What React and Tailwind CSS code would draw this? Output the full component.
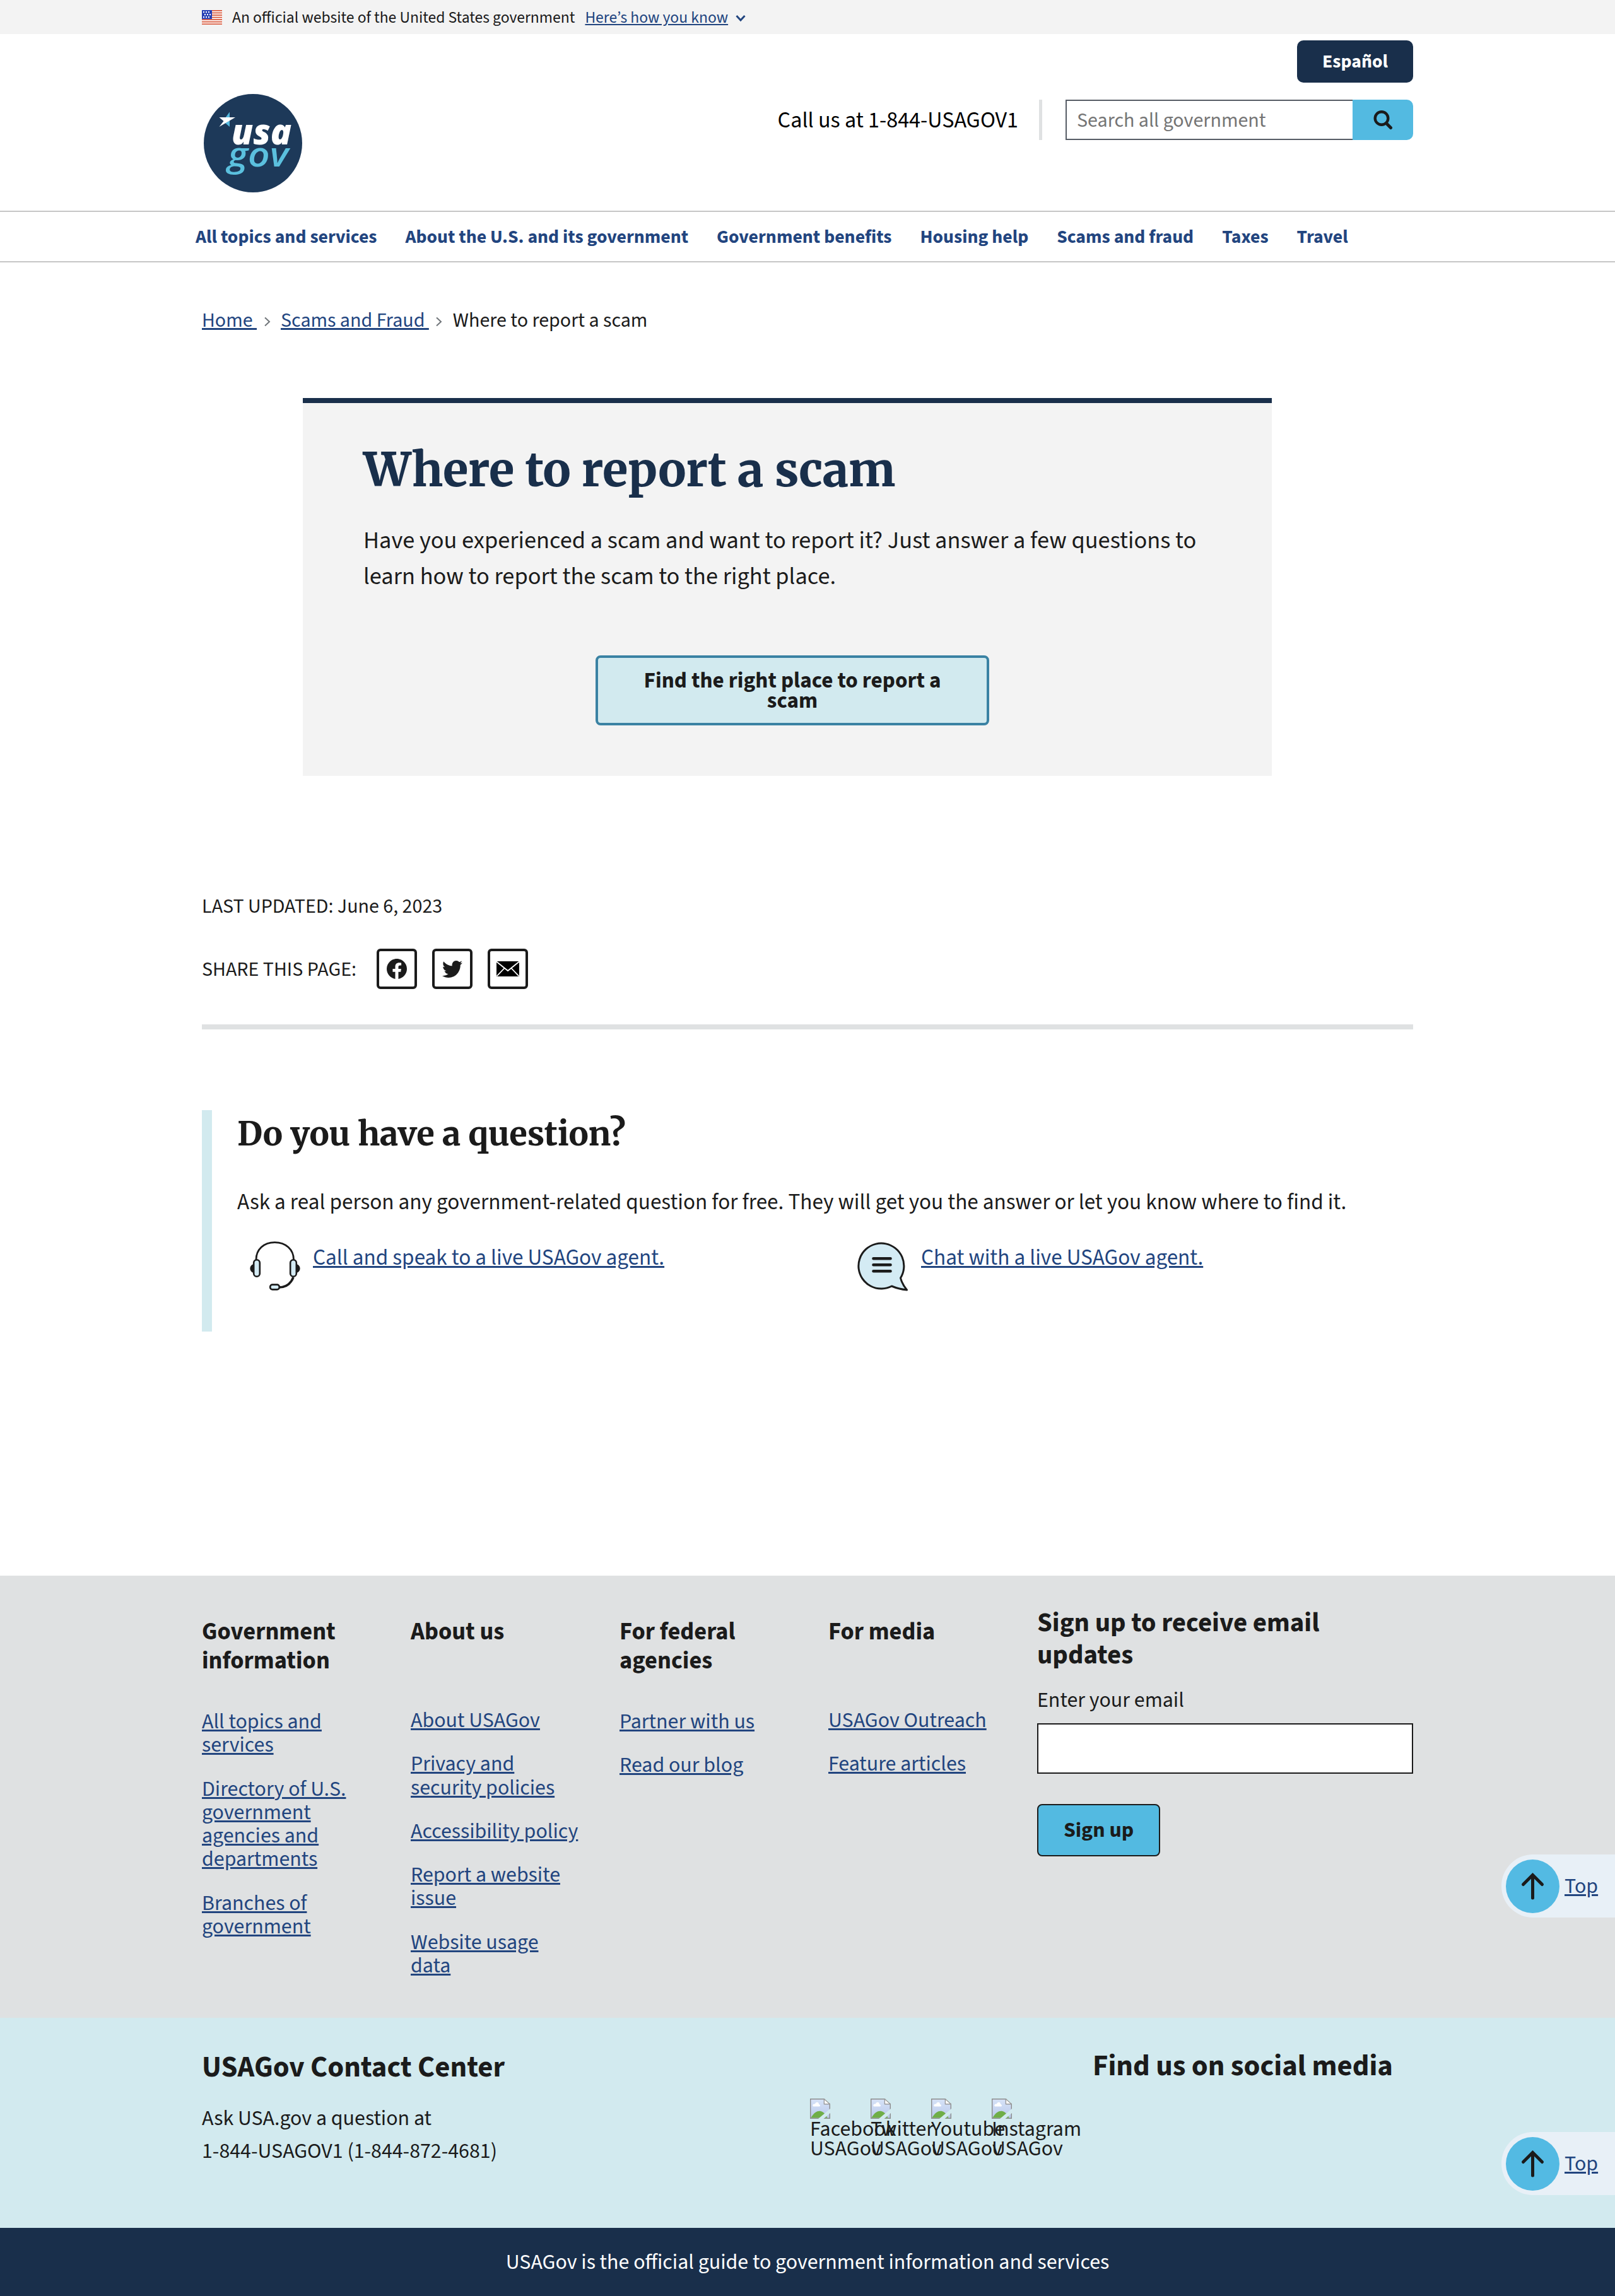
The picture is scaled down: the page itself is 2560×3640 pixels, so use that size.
import React from 'react';

const LINK = 'text-[#22457f] underline';

const NAV_ITEMS = [
  'All topics and services',
  'About the U.S. and its government',
  'Government benefits',
  'Housing help',
  'Scams and fraud',
  'Taxes',
  'Travel',
];

const FOOTER_COLUMNS = [
  {
    title: 'Government information',
    tall: true,
    links: ['All topics and services', 'Directory of U.S. government agencies and departments', 'Branches of government'],
  },
  {
    title: 'About us',
    tall: false,
    links: ['About USAGov', 'Privacy and security policies', 'Accessibility policy', 'Report a website issue', 'Website usage data'],
  },
  { title: 'For federal agencies', tall: true, links: ['Partner with us', 'Read our blog'] },
  { title: 'For media', tall: false, links: ['USAGov Outreach', 'Feature articles'] },
];

const SOCIAL = ['Facebook', 'Twitter', 'Youtube', 'Instagram'];

function Flag() {
  return (
    <svg width="32" height="23" viewBox="0 0 32 23" className="block shrink-0">
      <rect width="32" height="23" fill="#fff" />
      {[0, 1, 2, 3, 4, 5, 6].map((i) => (
        <rect key={i} y={i * 3.55} width="32" height="1.8" fill="#d9593d" />
      ))}
      <rect width="16" height="14.2" fill="#2740b5" />
      {[2, 6, 10].map((x) => (
        <g key={x} fill="#fff">
          <rect x={x} y="2" width="2" height="2.2" />
          <rect x={x + 2} y="6" width="2" height="2.2" />
          <rect x={x} y="10" width="2" height="2.2" />
        </g>
      ))}
    </svg>
  );
}

function Logo() {
  return (
    <svg width="156" height="156" viewBox="0 0 156 156" className="block">
      <circle cx="78" cy="78" r="78" fill="#1d3959" />
      <path d="M41 28.5 L34 38 L41 38 Z M34 46 L41 42 L41 52 Z" fill="#55b9de" />
      <path d="M24.5 37 L50 37 L24.5 52 L31.5 43 Z" fill="#fff" />
      <text x="44" y="79.5" textLength="95" lengthAdjust="spacingAndGlyphs" fill="#fff" className="font-['Open_Sans',sans-serif] text-[57px] font-extrabold italic">
        usa
      </text>
      <text x="38" y="115" textLength="96" lengthAdjust="spacingAndGlyphs" fill="#5bc0de" className="font-['Open_Sans',sans-serif] text-[54px] font-semibold italic">
        gov
      </text>
    </svg>
  );
}

function Chevron({ className, size }) {
  return (
    <svg width={size} height={size} viewBox="0 0 20 20" fill="none" stroke="currentColor" className={className}>
      <path d="M6 3.5 L13 10 L6 16.5" />
    </svg>
  );
}

function HeadsetIcon() {
  return (
    <svg width="80" height="78" viewBox="0 0 80 78" className="block shrink-0" fill="none" stroke="#1b1b1b">
      <path d="M10 29 C10 13 22 1.6 39.5 1.6 C57 1.6 69.5 13 69.5 29" strokeWidth="2.8" />
      <path d="M6 36 C-1.5 38 -1.5 48 6 50 Z M74 36 C81.5 38 81.5 48 74 50 Z" fill="#1b1b1b" stroke="none" />
      <path d="M69 57 C65 67 57 73 46 73" strokeWidth="3.6" />
      <rect x="6.2" y="29.2" width="9.6" height="26.6" rx="4.8" fill="#d4ebf4" strokeWidth="2.6" />
      <rect x="64.2" y="29.2" width="9.6" height="26.6" rx="4.8" fill="#d4ebf4" strokeWidth="2.6" />
      <rect x="32.2" y="68.6" width="14.6" height="7.8" rx="3.6" fill="#d4ebf4" strokeWidth="2.6" />
    </svg>
  );
}

function ChatIcon() {
  return (
    <svg width="79" height="79" viewBox="0 0 79 79" className="block shrink-0 overflow-visible" stroke="#1b1b1b">
      <path
        d="M52.5 71 A36 36 0 1 1 66.5 58 Q69 68 76.5 77 Q63 75.5 52.5 71 Z"
        fill="#d4ebf4"
        strokeWidth="3"
        strokeLinejoin="round"
      />
      <path d="M23.5 27.2 H50.5 M23.5 37.2 H50.5 M23.5 47.2 H50.5" strokeWidth="4.6" strokeLinecap="round" />
    </svg>
  );
}

function BrokenImage() {
  return (
    <svg width="32" height="32" viewBox="0 0 32 32" className="block">
      <defs>
        <linearGradient id="sky" x1="0" y1="0" x2="0" y2="1">
          <stop offset="0" stopColor="#d7e3f8" />
          <stop offset="1" stopColor="#b9c9ea" />
        </linearGradient>
      </defs>
      <path d="M0.7 0.7 H22.5 V8.5 H31.3 V31.3 H0.7 Z" fill="url(#sky)" stroke="#8c8c8c" strokeWidth="1.4" />
      <path d="M22.5 0.7 L31.3 8.7 H22.5 Z" fill="#fff" stroke="#9a9a9a" strokeWidth="1.2" />
      <path d="M5 12.5 C3 9.5 6 8 8 8.5 C9 4.5 14 5 14 9 C16.5 9.5 16.5 12 15 12.5 Z" fill="#fff" />
      <path d="M1.4 30.6 C6 22 12 19 17 20 C21 21 25 25 27.5 30.6 Z" fill="#6fae47" />
      <path d="M32.5 15.5 L12.5 32.5 H21 L32.5 22.5 Z" fill="#d2eaef" />
    </svg>
  );
}

function ShareButton({ children }) {
  return (
    <span className="flex size-16 items-center justify-center rounded-md border-4 border-[#1b1b1b]">{children}</span>
  );
}

function TopLink() {
  return (
    <div className="flex h-[100px] w-[180px] items-center rounded-l-full bg-[#e8f0f7] pl-[7px]">
      <svg width="85" height="85" viewBox="0 0 85 85" className="block shrink-0">
        <circle cx="42.5" cy="42.5" r="42.5" fill="#53bae3" />
        <path
          d="M42.5 61 V25 M27.5 39.5 L42.5 24.5 L57.5 39.5"
          fill="none"
          stroke="#1b1b1b"
          strokeWidth="5"
          strokeLinecap="round"
        />
      </svg>
      <a className={LINK + ' ml-2 pt-0.5 text-[33.9px] leading-[40px]'}>Top</a>
    </div>
  );
}

export default function App() {
  return (
    <div className="relative w-[2560px] bg-white font-['Source_Sans_3','Noto_Sans_CJK_SC',sans-serif] text-[#1b1b1b]">
      {/* Government banner */}
      <div className="flex h-[54px] items-center bg-[#f3f3f3] px-80 text-[25.6px] leading-[50px]">
        <Flag />
        <span className="ml-4 pt-0.5">An official website of the United States government</span>
        <a className={LINK + ' ml-4 pt-0.5'}>Here’s how you know</a>
        <Chevron size={20} className="mt-1 ml-2.5 rotate-90 stroke-[3px] text-[#22457f]" />
      </div>

      {/* Header */}
      <header className="flex h-[280px] items-start justify-between px-80">
        <div className="mt-[95px] ml-[3px]">
          <Logo />
        </div>
        <div className="flex flex-col items-end">
          <button className="mt-2.5 h-[67px] w-[184px] rounded-[10px] bg-[#192f4b] pt-px text-[29.76px] font-bold text-white">
            Español
          </button>
          <div className="mt-[27px] flex h-16 items-center">
            <span className="pt-px text-[36.1px] leading-[60px] text-black">Call us at 1-844-USAGOV1</span>
            <span className="ml-[33px] h-16 w-[5px] bg-[#dfe1e2]" />
            <span className="ml-[37px] flex h-16 w-[455px] items-center border-2 border-r-0 border-[#565c65] pt-0.5 pl-4 text-[32px] text-[#757575]">
              Search all government
            </span>
            <span className="flex h-16 w-24 items-center justify-center rounded-r-[10px] bg-[#53bae1]">
              <svg width="32" height="32" viewBox="0 0 32 32" fill="none" stroke="#1b1b1b" strokeLinecap="round">
                <circle cx="14" cy="13.5" r="10.3" strokeWidth="4.4" />
                <path d="M22 22 L28.5 28.5" strokeWidth="5" />
              </svg>
            </span>
          </div>
        </div>
      </header>

      {/* Primary navigation */}
      <nav className="flex h-[82px] items-center gap-[45px] border-y-2 border-[#c6c6c6] px-[310px] pt-0.5 text-[29.76px] font-bold text-[#22457f]">
        {NAV_ITEMS.map((item) => (
          <a key={item}>{item}</a>
        ))}
      </nav>

      <main className="px-80 pt-[68px]">
        <div className="flex h-12 items-center text-[32px] leading-[48px]">
          <a className={LINK + ' whitespace-pre'}>{'Home '}</a>
          <Chevron size={20} className="mt-1 mr-[11px] ml-[7px] stroke-2 text-[#71767a]" />
          <a className={LINK + ' whitespace-pre'}>{'Scams and Fraud '}</a>
          <Chevron size={20} className="mt-1 mr-[12px] ml-[6px] stroke-2 text-[#71767a]" />
          <span>Where to report a scam</span>
        </div>

        <section className="mt-[99px] ml-40 h-[599px] w-[1536px] border-t-8 border-[#192f4b] bg-[#f3f3f3] px-24 pt-[61px]">
          <h1 className="font-['Merriweather','DejaVu_Serif',serif] text-[73.8px] leading-[90px] font-extrabold tracking-[-0.28px] text-[#192f4b]">
            Where to report a scam
          </h1>
          <p className="mt-[39px] w-[1340px] text-[38.4px] leading-[57px]">
            Have you experienced a scam and want to report it? Just answer a few questions to learn how to report the
            scam to the right place.
          </p>
          <div className="mt-24 ml-[368px] flex h-[111px] w-[624px] items-center justify-center rounded-lg border-4 border-[#3a82a3] bg-[#d2eaef] pt-0.5">
            <span className="w-[500px] text-center text-[35.2px] leading-[31.7px] font-bold">
              Find the right place to report a scam
            </span>
          </div>
        </section>

        <p className="mt-[183px] text-[32px] leading-[48px]">LAST UPDATED: June 6, 2023</p>
        <div className="mt-[43px] flex h-16 items-center gap-6 text-[32px]">
          <span className="mr-2 pt-0.5">SHARE THIS PAGE:</span>
          <ShareButton>
            <svg width="32" height="32" viewBox="2 2 20 20">
              <path
                fill="#1b1b1b"
                d="M12 2.04C6.5 2.04 2 6.53 2 12.06C2 17.06 5.66 21.21 10.44 21.96V14.96H7.9V12.06H10.44V9.85C10.44 7.34 11.93 5.96 14.22 5.96C15.31 5.96 16.45 6.15 16.45 6.15V8.62H15.19C13.95 8.62 13.56 9.39 13.56 10.18V12.06H16.34L15.89 14.96H13.56V21.96C18.34 21.21 22 17.06 22 12.06C22 6.53 17.5 2.04 12 2.04Z"
              />
            </svg>
          </ShareButton>
          <ShareButton>
            <svg width="32" height="27" viewBox="1.54 4 20.92 17" preserveAspectRatio="none">
              <path
                fill="#1b1b1b"
                d="M22.46 6c-.77.35-1.6.58-2.46.69.88-.53 1.56-1.37 1.88-2.38-.83.5-1.75.85-2.72 1.05C18.37 4.5 17.26 4 16 4c-2.35 0-4.27 1.92-4.27 4.29 0 .34.04.67.11.98C8.28 9.09 5.11 7.38 3 4.79c-.37.63-.58 1.37-.58 2.15 0 1.49.75 2.81 1.91 3.56-.71 0-1.37-.2-1.95-.5v.03c0 2.08 1.48 3.82 3.44 4.21a4.22 4.22 0 0 1-1.93.07 4.28 4.28 0 0 0 4 2.98 8.521 8.521 0 0 1-5.33 1.84c-.34 0-.68-.02-1.02-.06C3.44 20.29 5.7 21 8.12 21 16 21 20.33 14.46 20.33 8.79c0-.19 0-.37-.01-.56.84-.6 1.56-1.36 2.14-2.23z"
              />
            </svg>
          </ShareButton>
          <ShareButton>
            <svg width="36" height="24" viewBox="0 0 36 24">
              <rect width="36" height="24" fill="#000" />
              <path d="M0 0.5 L18 15 L36 0.5 M0.5 23.5 L12.5 11 M35.5 23.5 L23.5 11" fill="none" stroke="#fff" strokeWidth="1.8" />
            </svg>
          </ShareButton>
        </div>
        <div className="mt-14 h-2 bg-[#dfe1e2]" />

        <section className="mt-32 h-[351px] border-l-16 border-[#d2eaef] pt-1.5 pl-10">
          <h2 className="font-['Merriweather','DejaVu_Serif',serif] text-[52.2px] leading-[64px] font-extrabold tracking-[-0.24px]">
            Do you have a question?
          </h2>
          <p className="mt-[50px] text-[35.2px] leading-[52px]">
            Ask a real person any government-related question for free. They will get you the answer or let you know
            where to find it.
          </p>
          <div className="mt-9 ml-5 flex items-start text-[35.2px] leading-[52px]">
            <div className="flex w-[965px] gap-5">
              <HeadsetIcon />
              <a className={LINK}>Call and speak to a live USAGov agent.</a>
            </div>
            <div className="flex gap-5">
              <ChatIcon />
              <a className={LINK}>Chat with a live USAGov agent.</a>
            </div>
          </div>
        </section>
      </main>

      <footer className="mt-[387px]">
        <div className="flex h-[701px] items-start bg-[#dfe1e2] px-80">
          {FOOTER_COLUMNS.map((col) => (
            <div key={col.title} className="mr-16 w-[267px] pt-[66px]">
              <h3 className={(col.tall ? 'h-[147px]' : 'h-[145px]') + ' text-[38.4px] leading-[46px] font-bold'}>
                {col.title}
              </h3>
              <ul className="flex flex-col gap-8 text-[33.92px] leading-[37.3px]">
                {col.links.map((l) => (
                  <li key={l}>
                    <a className={LINK}>{l}</a>
                  </li>
                ))}
              </ul>
            </div>
          ))}
          <div className="flex flex-1 flex-col items-start pt-[49px]">
            <h3 className="w-[500px] text-[42.88px] leading-[51px] font-bold">Sign up to receive email updates</h3>
            <label className="mt-[25px] text-[33.92px] leading-[44px]">Enter your email</label>
            <div className="mt-3.5 h-20 w-full border-2 border-[#1b1b1b] bg-white" />
            <button className="mt-12 h-[83px] w-[195px] rounded-lg border-2 border-[#1b1b1b] bg-[#53bae1] pt-0.5 text-[33.92px] font-bold">
              Sign up
            </button>
          </div>
        </div>

        <div className="flex h-[333px] items-start bg-[#d2eaef] px-80">
          <div className="w-[964px] pt-[51px]">
            <h3 className="text-[46.72px] leading-[56px] font-bold">USAGov Contact Center</h3>
            <p className="mt-[27px] text-[33.92px] leading-[52px]">
              Ask USA.gov a question at
              <br />
              1-844-USAGOV1 (1-844-872-4681)
            </p>
          </div>
          <div className="flex-1 pt-[49px]">
            <h3 className="pr-8 text-right text-[46.72px] leading-[56px] font-bold">Find us on social media</h3>
            <div className="mt-[23px] flex">
              {SOCIAL.map((name) => (
                <div key={name} className="w-24">
                  <BrokenImage />
                  <p className="pt-px text-[33.92px] leading-[31px]">
                    {name}
                    <br />
                    USAGov
                  </p>
                </div>
              ))}
            </div>
          </div>
        </div>

        <div className="flex h-[108px] items-center justify-center bg-[#192f4b] pt-0.5 text-[33.92px] text-white">
          USAGov is the official guide to government information and services
        </div>
      </footer>

      {/* Floating back-to-top links */}
      <div className="absolute top-[2940px] right-0">
        <TopLink />
      </div>
      <div className="absolute top-[3380px] right-0">
        <TopLink />
      </div>
    </div>
  );
}
